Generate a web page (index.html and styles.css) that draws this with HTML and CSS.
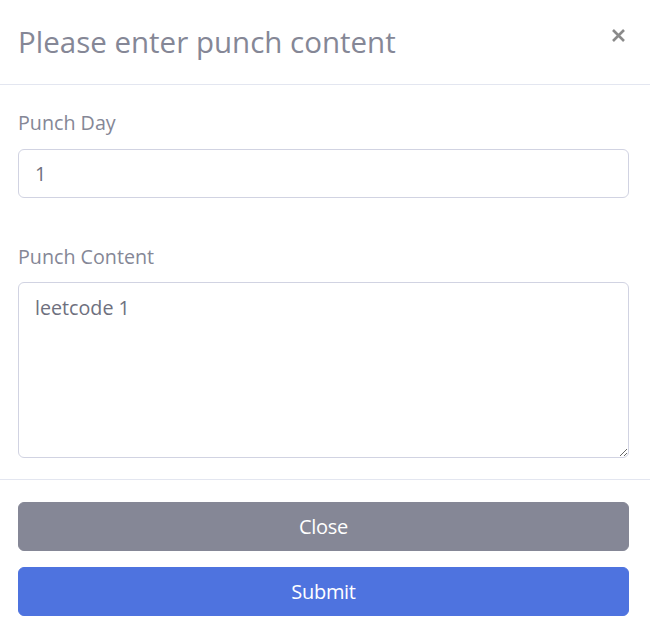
FILE: index.html
```html
<!DOCTYPE html>
<html>
<head>
<meta charset="utf-8">
<link rel="stylesheet" href="styles.css">
</head>
<body>
<div class="modal">
  <div class="modal-header">
    <h5 class="modal-title">Please enter punch content</h5>
    <button class="close" type="button" aria-label="Close">
      <svg width="15" height="15" viewBox="0 0 15 15"><path d="M2 2L13 13M13 2L2 13" stroke="#8a8a8a" stroke-width="2.6" stroke-linecap="butt"/></svg>
    </button>
  </div>
  <div class="modal-body">
    <div class="form-group">
      <label class="form-label">Punch Day</label>
      <input class="form-control" type="text" value="1">
    </div>
    <div class="form-group last">
      <label class="form-label">Punch Content</label>
      <textarea class="form-control textarea">leetcode 1</textarea>
    </div>
  </div>
  <div class="modal-footer">
    <button class="btn btn-secondary" type="button">Close</button>
    <button class="btn btn-primary" type="button">Submit</button>
  </div>
</div>
</body>
</html>
```

FILE: styles.css
```css
* { box-sizing: border-box; }
html, body {
  margin: 0;
  padding: 0;
  background: #fff;
}
body {
  font-family: "Open Sans", "Noto Sans", sans-serif;
  color: #858796;
}
.modal {
  width: 650px;
  display: flex;
  flex-direction: column;
}
.modal-header {
  height: 85px;
  border-bottom: 1px solid #e3e6f0;
  padding: 0 18px;
  display: flex;
  justify-content: space-between;
  align-items: center;
}
.modal-title {
  margin: 0;
  font-size: 29.5px;
  font-weight: 400;
  line-height: 1.2;
  color: #858796;
}
.close {
  align-self: flex-start;
  margin-top: 28px;
  margin-right: 6px;
  padding: 0;
  border: 0;
  background: transparent;
  width: 15px;
  height: 15px;
  display: flex;
}
.modal-body {
  padding: 23px 21px 21px 18px;
  border-bottom: 1px solid #e3e6f0;
}
.form-group {
  display: flex;
  flex-direction: column;
  margin-bottom: 44px;
}
.form-group.last { margin-bottom: 0; }
.form-label {
  font-size: 19.7px;
  line-height: 30px;
  margin-bottom: 11px;
  color: #858796;
}
.form-group.last .form-label { margin-bottom: 10px; }
.form-control {
  width: 100%;
  height: 49px;
  border: 1px solid #d1d3e2;
  border-radius: 6px;
  padding: 0 16px;
  font-family: "Open Sans", "Noto Sans", sans-serif;
  font-size: 19.7px;
  color: #6e707e;
  background: #fff;
  outline: none;
}
.textarea {
  height: 176px;
  padding: 11px 16px;
  line-height: 1.45;
  resize: vertical;
}
.modal-footer {
  padding: 22px 21px 18px 18px;
  display: flex;
  flex-direction: column;
  gap: 16px;
}
.btn {
  width: 100%;
  height: 49px;
  border: 1px solid transparent;
  border-radius: 6px;
  font-family: "Open Sans", "Noto Sans", sans-serif;
  font-size: 20px;
  color: #fff;
  letter-spacing: -0.3px;
}
.btn-secondary {
  background: #858796;
  border-color: #858796;
}
.btn-primary {
  background: #4e73df;
  border-color: #4e73df;
}
```
